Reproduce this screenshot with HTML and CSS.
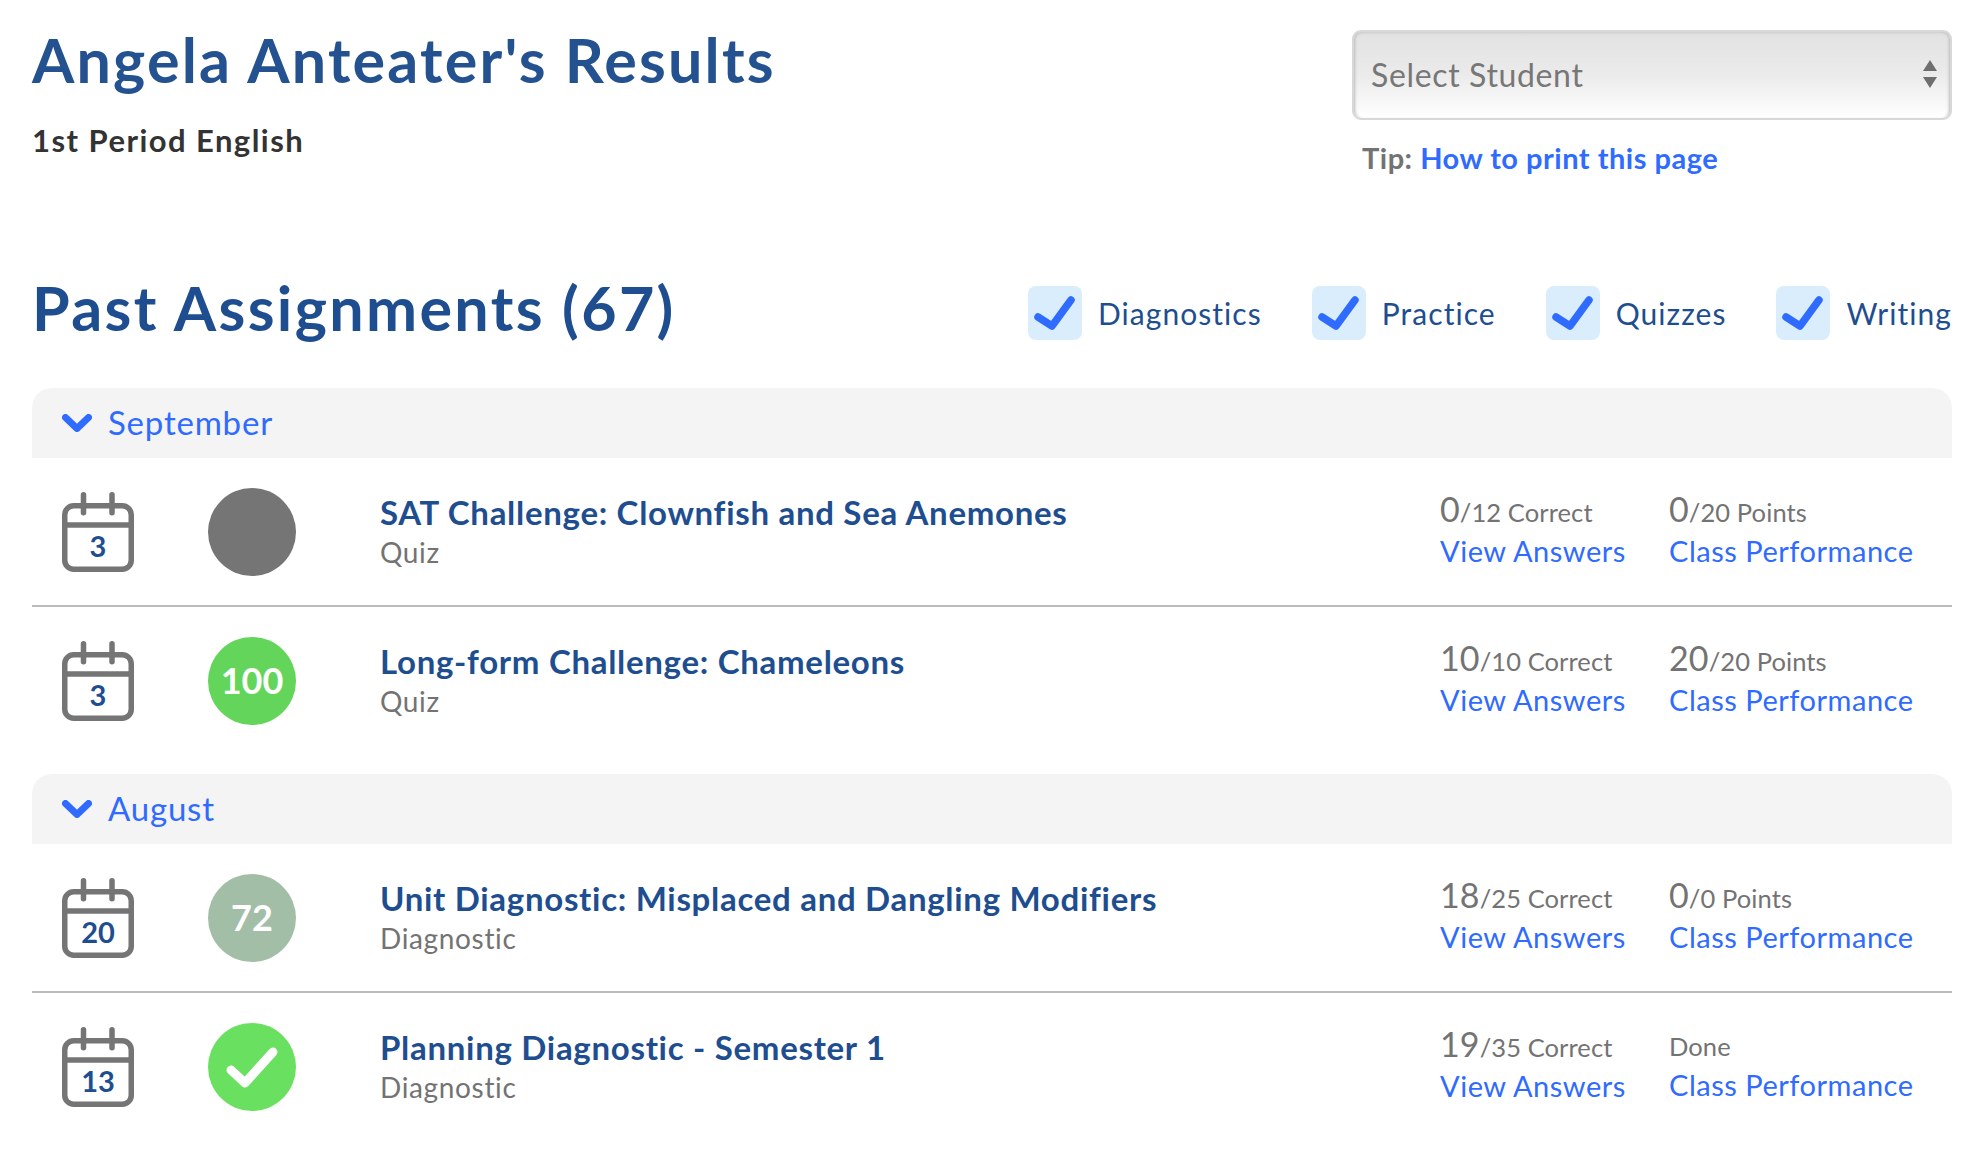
FILE: index.html
```html
<!DOCTYPE html>
<html lang="en">
<head>
<meta charset="utf-8">
<title>Angela Anteater's Results</title>
<link rel="stylesheet" href="styles.css">
</head>
<body>
<main class="page">
  <header class="top">
    <div class="who">
      <h1 class="name">Angela Anteater's Results</h1>
      <p class="period">1st Period English</p>
    </div>
    <div class="picker">
      <div class="select">
        <span>Select Student</span>
        <svg class="arrows" width="16" height="28" viewBox="0 0 16 28"><path d="M8 0l7 11H1zM8 28L1 17h14z" fill="#6f6f6f"/></svg>
      </div>
      <p class="tip">Tip: <a href="#">How to print this page</a></p>
    </div>
  </header>

  <div class="toolbar">
    <h2 class="past">Past Assignments (67)</h2>
    <div class="filters">
      <label class="filter f1"><svg class="box" width="54" height="54" viewBox="0 0 54 54"><rect width="54" height="54" rx="8" fill="#d9edfd"/><path d="M10 31l14 9 19-26" class="tick"/></svg><span>Diagnostics</span></label>
      <label class="filter f2"><svg class="box" width="54" height="54" viewBox="0 0 54 54"><rect width="54" height="54" rx="8" fill="#d9edfd"/><path d="M10 31l14 9 19-26" class="tick"/></svg><span>Practice</span></label>
      <label class="filter f3"><svg class="box" width="54" height="54" viewBox="0 0 54 54"><rect width="54" height="54" rx="8" fill="#d9edfd"/><path d="M10 31l14 9 19-26" class="tick"/></svg><span>Quizzes</span></label>
      <label class="filter"><svg class="box" width="54" height="54" viewBox="0 0 54 54"><rect width="54" height="54" rx="8" fill="#d9edfd"/><path d="M10 31l14 9 19-26" class="tick"/></svg><span>Writing</span></label>
    </div>
  </div>

  <section class="month">
    <div class="bar"><svg class="chev-icon" width="30" height="18" viewBox="0 0 30 18"><path d="M3.5 3.5L15 14.5 26.5 3.5" class="chev"/></svg><span>September</span></div>
    <article class="row">
      <svg class="cal" width="72" height="80" viewBox="0 0 72 80"><rect x="2.75" y="13.75" width="66.5" height="63.5" rx="9" class="cal-line"/><path d="M0 33h72M21.5 2.75v18M50 2.75v18" class="cal-line"/><text x="36" y="64.5" class="cal-day">3</text></svg>
      <div class="score grey"></div>
      <div class="info"><a class="title" href="#">SAT Challenge: Clownfish and Sea Anemones</a><span class="kind">Quiz</span></div>
      <div class="stat"><span class="num"><b>0</b>/12 Correct</span><a href="#">View Answers</a></div>
      <div class="stat"><span class="num"><b>0</b>/20 Points</span><a href="#">Class Performance</a></div>
    </article>
    <article class="row">
      <svg class="cal" width="72" height="80" viewBox="0 0 72 80"><rect x="2.75" y="13.75" width="66.5" height="63.5" rx="9" class="cal-line"/><path d="M0 33h72M21.5 2.75v18M50 2.75v18" class="cal-line"/><text x="36" y="64.5" class="cal-day">3</text></svg>
      <div class="score green">100</div>
      <div class="info"><a class="title" href="#">Long-form Challenge: Chameleons</a><span class="kind">Quiz</span></div>
      <div class="stat"><span class="num"><b>10</b>/10 Correct</span><a href="#">View Answers</a></div>
      <div class="stat"><span class="num"><b>20</b>/20 Points</span><a href="#">Class Performance</a></div>
    </article>
  </section>

  <section class="month">
    <div class="bar"><svg class="chev-icon" width="30" height="18" viewBox="0 0 30 18"><path d="M3.5 3.5L15 14.5 26.5 3.5" class="chev"/></svg><span>August</span></div>
    <article class="row">
      <svg class="cal" width="72" height="80" viewBox="0 0 72 80"><rect x="2.75" y="13.75" width="66.5" height="63.5" rx="9" class="cal-line"/><path d="M0 33h72M21.5 2.75v18M50 2.75v18" class="cal-line"/><text x="36" y="64.5" class="cal-day">20</text></svg>
      <div class="score sage">72</div>
      <div class="info"><a class="title" href="#">Unit Diagnostic: Misplaced and Dangling Modifiers</a><span class="kind">Diagnostic</span></div>
      <div class="stat"><span class="num"><b>18</b>/25 Correct</span><a href="#">View Answers</a></div>
      <div class="stat"><span class="num"><b>0</b>/0 Points</span><a href="#">Class Performance</a></div>
    </article>
    <article class="row">
      <svg class="cal" width="72" height="80" viewBox="0 0 72 80"><rect x="2.75" y="13.75" width="66.5" height="63.5" rx="9" class="cal-line"/><path d="M0 33h72M21.5 2.75v18M50 2.75v18" class="cal-line"/><text x="36" y="64.5" class="cal-day">13</text></svg>
      <div class="score done"><svg width="88" height="88" viewBox="0 0 88 88"><path d="M23 47l14 13 28-31" class="ok"/></svg></div>
      <div class="info"><a class="title" href="#">Planning Diagnostic - Semester 1</a><span class="kind">Diagnostic</span></div>
      <div class="stat"><span class="num"><b>19</b>/35 Correct</span><a href="#">View Answers</a></div>
      <div class="stat"><span class="num">Done</span><a href="#">Class Performance</a></div>
    </article>
  </section>
</main>
</body>
</html>
```
FILE: styles.css
```css
* { box-sizing: border-box; }
html, body { margin: 0; padding: 0; background: #fff; }
body { font-family: Lato, "Open Sans", sans-serif; color: #737373; }
a { color: #2f6bff; text-decoration: none; }
h1, h2, p { margin: 0; }
.page { padding: 0 34px 0 32px; }

.top { display: flex; justify-content: space-between; height: 258px; }
.who { padding-top: 24px; }
.name { font-size: 61px; line-height: 72px; font-weight: 700; color: #245290; letter-spacing: 2.2px; }
.period { margin-top: 26px; font-size: 31px; line-height: 36px; font-weight: 700; color: #333; letter-spacing: 1.45px; }
.picker { width: 600px; padding-top: 30px; }
.select { height: 90px; display: flex; align-items: center; justify-content: space-between; padding: 0 12px 2px 17px; border: 2px solid #d8d8d8; border-radius: 9px; background: linear-gradient(#e2e2e2 0, #ebebeb 50%, #fff 100%); box-shadow: inset 3px 0 3px -2px #bbb, inset -3px 0 3px -2px #bbb, inset 0 3px 3px -2px #ccc; font-size: 32px; color: #777; letter-spacing: 0.65px; }
.tip { margin-top: 20px; padding-left: 10px; font-size: 29px; line-height: 36px; font-weight: 700; color: #737373; letter-spacing: 0.5px; }
.tip a { font-weight: 700; }

.toolbar { display: flex; justify-content: space-between; align-items: center; height: 130px; padding-bottom: 31px; }
.past { font-size: 61px; line-height: 72px; font-weight: 700; color: #1e4e8f; letter-spacing: 2.35px; }
.filters { display: flex; margin-top: 11px; }
.filter { display: flex; align-items: center; gap: 16px; font-size: 30px; color: #1e4e8f; letter-spacing: 1.05px; }
.f1 { margin-right: 50px; }
.f2 { margin-right: 50px; }
.f3 { margin-right: 50px; }

.month { margin-bottom: 19px; }
.bar { height: 70px; display: flex; align-items: center; gap: 16px; padding: 0 0 2px 30px; background: #f4f4f4; border-radius: 20px 20px 0 0; font-size: 33px; color: #2f6bff; letter-spacing: 0.8px; }
.chev-icon { margin-top: 2px; }
.chev { fill: none; stroke: #2f6bff; stroke-width: 7; stroke-linecap: round; stroke-linejoin: round; }
.tick { fill: none; stroke: #2f6bff; stroke-width: 7.5; stroke-linecap: round; stroke-linejoin: round; }

.row { display: grid; grid-template-columns: 146px 172px 1fr 229px 283px; align-items: center; padding: 30px 0 29px 30px; border-bottom: 2px solid #bbb; }
.row:last-child { border-bottom: 0; padding-bottom: 30px; }
.cal { display: block; }
.cal-line { fill: none; stroke: #757575; stroke-width: 5.5; stroke-linecap: round; }
.cal-day { font-family: Lato, sans-serif; font-size: 29px; font-weight: 700; fill: #1e4e8f; text-anchor: middle; }
.score { width: 88px; height: 88px; border-radius: 50%; display: flex; align-items: center; justify-content: center; color: #fff; font-size: 36px; font-weight: 700; padding-bottom: 3px; }
.grey { background: #757575; }
.green { background: #63d55a; }
.sage { background: #a2bea7; }
.done { background: #6ae060; padding-bottom: 0; }
.ok { fill: none; stroke: #fff; stroke-width: 9; stroke-linecap: round; stroke-linejoin: round; }
.info, .stat { display: flex; flex-direction: column; }
.info { margin-bottom: 1px; }
.title { font-size: 33px; line-height: 38px; font-weight: 700; color: #1e4e8f; letter-spacing: 0.7px; }
.kind { margin-top: 2px; font-size: 28px; line-height: 38px; color: #737373; letter-spacing: 0.65px; }
.stat { margin-bottom: 5px; }
.num { font-size: 25.5px; line-height: 40px; color: #737373; letter-spacing: 0.1px; }
.num b { font-size: 34px; font-weight: 400; }
.stat a { font-size: 29px; line-height: 38px; letter-spacing: 0.52px; }
```
